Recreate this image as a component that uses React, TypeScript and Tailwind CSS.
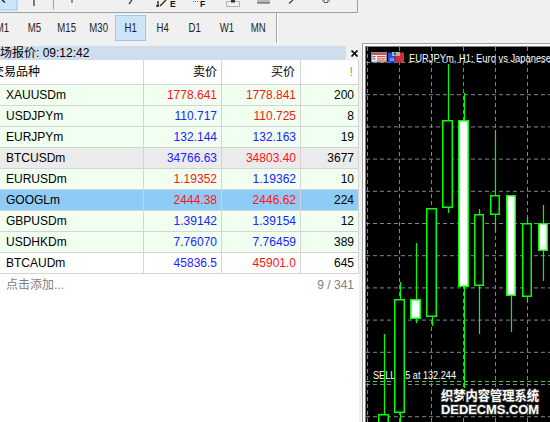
import React from 'react';

type Quote = {
  sym: string;
  bid: string;
  ask: string;
  spread: string;
  bidUp: boolean;
  askUp: boolean;
  bg: string;
};

const quotes: Quote[] = [
  { sym: 'XAUUSDm', bid: '1778.641', ask: '1778.841', spread: '200', bidUp: false, askUp: false, bg: 'bg-[#f0fff0]' },
  { sym: 'USDJPYm', bid: '110.717', ask: '110.725', spread: '8', bidUp: true, askUp: false, bg: 'bg-[#f0fff0]' },
  { sym: 'EURJPYm', bid: '132.144', ask: '132.163', spread: '19', bidUp: true, askUp: true, bg: 'bg-[#f0fff0]' },
  { sym: 'BTCUSDm', bid: '34766.63', ask: '34803.40', spread: '3677', bidUp: true, askUp: false, bg: 'bg-[#ebebeb]' },
  { sym: 'EURUSDm', bid: '1.19352', ask: '1.19362', spread: '10', bidUp: false, askUp: true, bg: 'bg-[#f0fff0]' },
  { sym: 'GOOGLm', bid: '2444.38', ask: '2446.62', spread: '224', bidUp: false, askUp: false, bg: 'bg-[#8ecbf6]' },
  { sym: 'GBPUSDm', bid: '1.39142', ask: '1.39154', spread: '12', bidUp: true, askUp: true, bg: 'bg-[#f0fff0]' },
  { sym: 'USDHKDm', bid: '7.76070', ask: '7.76459', spread: '389', bidUp: true, askUp: true, bg: 'bg-[#f0fff0]' },
  { sym: 'BTCAUDm', bid: '45836.5', ask: '45901.0', spread: '645', bidUp: true, askUp: false, bg: 'bg-white' },
];

const timeframes = ['M1', 'M5', 'M15', 'M30', 'H1', 'H4', 'D1', 'W1', 'MN'];

// candles in screen coords: left, right, body top/bottom, wick top/bottom, white fill
const candles = [
  { l: 378, r: 389, bt: 414, bb: 440, wt: 334, wb: 440, white: false },
  { l: 394, r: 405, bt: 299, bb: 413, wt: 282, wb: 440, white: false },
  { l: 410, r: 421, bt: 299, bb: 319, wt: 243, wb: 323, white: true },
  { l: 426, r: 437, bt: 208, bb: 317, wt: 208, wb: 326, white: false },
  { l: 442, r: 453, bt: 120, bb: 208, wt: 64, wb: 213, white: false },
  { l: 458, r: 469, bt: 120, bb: 287, wt: 93, wb: 388, white: true },
  { l: 474, r: 484, bt: 214, bb: 286, wt: 209, wb: 334, white: false },
  { l: 490, r: 500, bt: 195, bb: 215, wt: 130, wb: 232, white: false },
  { l: 506, r: 516, bt: 195, bb: 296, wt: 195, wb: 332, white: true },
  { l: 522, r: 532, bt: 223, bb: 297, wt: 217, wb: 302, white: false },
  { l: 538, r: 548, bt: 223, bb: 251, wt: 205, wb: 281, white: true },
];

function ToolbarFragments() {
  // bottoms of the icons of the upper toolbar, cut off by the screenshot
  return (
    <svg width={357} height={12} className="block">
      <rect x={-1} y={-1} width={18} height={11} fill="#cce4f7" stroke="#99c9ef" />
      <path d="M2 0 L5 2.5" stroke="#222" strokeWidth={1.5} />
      <line x1={34} y1={0} x2={34} y2={6} stroke="#555" strokeWidth={1.5} />
      <line x1={53.5} y1={0} x2={53.5} y2={9.5} stroke="#a0a0a0" />
      <line x1={72} y1={0} x2={72} y2={3} stroke="#555" strokeWidth={1.2} />
      <path d="M132 0 L129 4" stroke="#444" strokeWidth={1.3} />
      <path d="M158 1 L158 6 M156 6 L159 6 M160 6 L166 0" stroke="#222" strokeWidth={1.3} fill="none" />
      <text x={170} y={7} fontSize={8.5} fontWeight={700} fill="#111" fontFamily="Liberation Sans">E</text>
      <path d="M193 1.5 L199 1.5" stroke="#666" strokeDasharray="1 1" />
      <text x={200} y={7} fontSize={8.5} fontWeight={700} fill="#111" fontFamily="Liberation Sans">F</text>
      <rect x={226.5} y={1.5} width={13} height={5} fill="none" stroke="#777" strokeDasharray="1 1" />
      <rect x={231} y={0} width={4} height={2.5} fill="#333" />
      <rect x={257} y={0} width={13} height={3} fill="#b8b8b8" />
      <line x1={257} y1={3} x2={270} y2={3} stroke="#555" />
      <path d="M293 0 L289 3.5" stroke="#444" strokeWidth={1.3} />
      <path d="M322 1 L325 1 M327 1 L330 1 M324 2.5 L328 2.5" stroke="#555" />
    </svg>
  );
}

function CloseIcon() {
  return (
    <svg width={7} height={7} viewBox="0 0 7 7">
      <path d="M0.5 0.5 L6.5 6.5 M6.5 0.5 L0.5 6.5" stroke="#111" strokeWidth={1.7} />
    </svg>
  );
}

function MarketWatch() {
  const red = 'text-[#ff1414]';
  const blue = 'text-[#2222ff]';

  return (
    <div className="flex w-[362px] flex-col pt-[3px]">
      {/* title */}
      <div className="flex h-[14px] items-center">
        <div className="flex h-full w-[346px] items-center overflow-hidden bg-[#d0dded]">
          <span className="ml-[-12px] whitespace-nowrap text-[12px] leading-[14px] text-black">市场报价: 09:12:42</span>
        </div>
        <div className="ml-[5px] flex items-center">
          <CloseIcon />
        </div>
      </div>

      <div className="flex w-[359px] flex-1 flex-col bg-white">
        {/* header */}
        <div className="flex h-[25px] border-b border-[#d4d4d4] text-[12px] text-black">
          <div className="flex w-[144px] items-center overflow-hidden border-r border-[#d4d4d4]">
            <span className="ml-[-8px] whitespace-nowrap">交易品种</span>
          </div>
          <div className="flex w-[78px] items-center justify-end border-r border-[#d4d4d4] pr-[4px]">卖价</div>
          <div className="flex w-[79px] items-center justify-end border-r border-[#d4d4d4] pr-[5px]">买价</div>
          <div className="flex w-[58px] items-center justify-end border-r border-[#d4d4d4] pr-[5px] text-[#e08000]">!</div>
        </div>

        {quotes.map((q) => (
          <div key={q.sym} className={`flex h-[21px] border-b border-[#d4d4d4] text-[12px] ${q.bg}`}>
            <div className="flex w-[144px] items-center border-r border-[#d4d4d4] pl-[6px] text-black">{q.sym}</div>
            <div className={`flex w-[78px] items-center justify-end border-r border-[#d4d4d4] pr-[4px] ${q.bidUp ? blue : red}`}>
              {q.bid}
            </div>
            <div className={`flex w-[79px] items-center justify-end border-r border-[#d4d4d4] pr-[4px] ${q.askUp ? blue : red}`}>
              {q.ask}
            </div>
            <div className="flex w-[58px] items-center justify-end border-r border-[#d4d4d4] pr-[4px] text-black">{q.spread}</div>
          </div>
        ))}

        <div className="flex h-[21px] items-center justify-between pl-[6px] pr-[5px] text-[12px] text-[#808080]">
          <span>点击添加...</span>
          <span>9 / 341</span>
        </div>
      </div>
    </div>
  );
}

function Chart() {
  const hLines = Array.from({ length: 12 }, (_, i) => 62.5 + i * 32.2);
  const vLines = [367.5, 399.5, 431.5, 463.5, 495.5, 527.5];

  return (
    <svg width={184} height={375} viewBox="366 47 184 375" className="block">
      <rect x={366} y={47} width={184} height={375} fill="#000" />
      {hLines.map((y) => (
        <line key={y} x1={366} y1={y} x2={550} y2={y} stroke="#778899" strokeDasharray="4 3" />
      ))}
      {vLines.map((x) => (
        <line key={x} x1={x} y1={47} x2={x} y2={422} stroke="#778899" strokeDasharray="4 3" />
      ))}

      {/* order line */}
      <line x1={366} y1={381.5} x2={550} y2={381.5} stroke="#32dc32" strokeDasharray="4 3" />
      <text x={373} y={379} fontSize={10} fill="#fff" fontFamily="Liberation Sans" textLength={83} lengthAdjust="spacingAndGlyphs">
        SELL 0.5 at 132.244
      </text>

      {candles.map((c) => {
        const cx = Math.round((c.l + c.r) / 2) + 0.5;
        return (
          <g key={c.l}>
            <line x1={cx} y1={c.wt} x2={cx} y2={c.wb} stroke="#00ff00" strokeWidth={1.2} />
            <rect
              x={c.l + 0.75}
              y={c.bt + 0.75}
              width={c.r - c.l - 1.5}
              height={c.bb - c.bt - 1.5}
              fill={c.white ? '#fff' : '#000'}
              stroke="#00ff00"
              strokeWidth={1.5}
            />
          </g>
        );
      })}

      {/* title icons */}
      <rect x={371.5} y={52.5} width={15} height={9.5} fill="#f2f2f2" stroke="#8a8a8a" />
      <rect x={372} y={53} width={14} height={2} fill="#d85050" />
      <rect x={372.5} y={56} width={3} height={1.2} fill="#4a6fd0" />
      <rect x={372.5} y={58.3} width={3} height={1.2} fill="#4a6fd0" />
      <rect x={377} y={56} width={8.5} height={1.2} fill="#e05050" />
      <rect x={377} y={58.3} width={8.5} height={1.2} fill="#e05050" />
      <rect x={377} y={60.4} width={8.5} height={1} fill="#e05050" />

      <rect x={388} y={52.5} width={8} height={10} fill="#2a4de0" />
      <rect x={396} y={52.5} width={8} height={10} fill="#d23030" />
      <rect x={392} y={52} width={8} height={4} fill="#b0b0b0" />
      <rect x={394} y={52.5} width={2} height={2.5} fill="#555" />
      <rect x={390} y={58} width={4} height={3} fill="#7b93f0" />

      <text x={409} y={62} fontSize={11} fill="#fff" fontFamily="Liberation Sans" textLength={142} lengthAdjust="spacingAndGlyphs">
        EURJPYm, H1: Euro vs Japanese
      </text>

      {/* watermark of the screenshot source */}
      <text
        x={441}
        y={400}
        fontSize={13}
        fontWeight={700}
        fill="#fff"
        stroke="#2a2a2a"
        strokeWidth={2}
        paintOrder="stroke"
        fontFamily="Noto Sans CJK SC"
        textLength={98}
        lengthAdjust="spacingAndGlyphs"
      >
        织梦内容管理系统
      </text>
      <text
        x={441}
        y={413.5}
        fontSize={12}
        fontWeight={700}
        fill="#fff"
        stroke="#2a2a2a"
        strokeWidth={2}
        paintOrder="stroke"
        fontFamily="Liberation Sans"
        textLength={98}
        lengthAdjust="spacingAndGlyphs"
      >
        DEDECMS.COM
      </text>
    </svg>
  );
}

export default function App() {
  return (
    <div className="relative h-[422px] w-[550px] overflow-hidden bg-[#f0f0f0] font-['Liberation_Sans','Noto_Sans_CJK_SC',sans-serif]">
      {/* upper toolbar, cut off */}
      <div className="h-[13px] w-[358px] border-b border-r border-[#a0a0a0]">
        <ToolbarFragments />
      </div>

      {/* timeframe toolbar */}
      <div className="flex h-[30px] items-center">
        <div className="ml-[-13px] flex gap-[1px]">
          {timeframes.map((tf) => (
            <div
              key={tf}
              className={`flex h-[26px] w-[31px] items-center justify-center border text-[12px] text-[#222] ${
                tf === 'H1' ? 'border-[#99c9ef] bg-[#cce4f7]' : 'border-transparent'
              }`}
            >
              <span className="scale-x-[0.8]">{tf}</span>
            </div>
          ))}
        </div>
        <div className="ml-[2px] h-[30px] w-px bg-[#a8a8a8]" />
        <div className="h-[30px] w-px bg-white" />
      </div>

      <div className="flex h-[379px]">
        <MarketWatch />
        <div className="flex-1 border-l border-t border-[#a0a0a0]">
          <div className="h-full border-l-2 border-t-2 border-white">
            <div className="h-full border-l border-t border-[#808080] bg-black">
              <Chart />
            </div>
          </div>
        </div>
      </div>
    </div>
  );
}
